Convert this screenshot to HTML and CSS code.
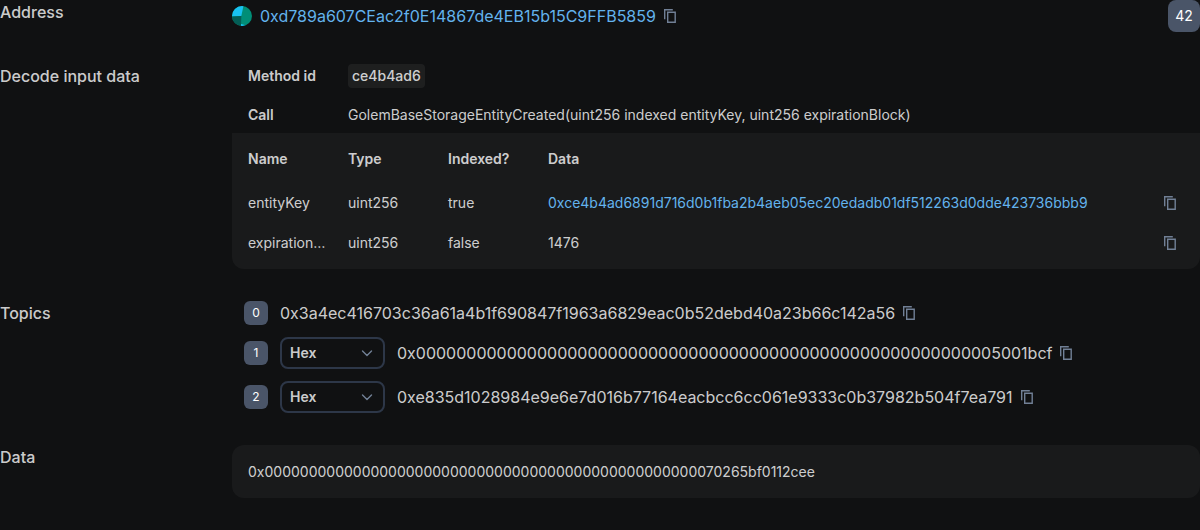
FILE: index.html
```html
<!DOCTYPE html>
<html lang="en">
<head>
<meta charset="utf-8">
<title>Transaction log</title>
<link rel="stylesheet" href="styles.css">
</head>
<body>
<svg class="defs" aria-hidden="true">
  <symbol id="copy" viewBox="0 0 20 20">
    <path d="M4.7 13.3V3.7H12.8M7.7 6.2H15.2V16.2H7.7Z" fill="none" stroke="currentColor" stroke-width="1.4"/>
  </symbol>
  <symbol id="chevron" viewBox="0 0 20 20">
    <path d="M5.5 8L10 12.5L14.5 8" fill="none" stroke="currentColor" stroke-width="1.4" stroke-linecap="round" stroke-linejoin="round"/>
  </symbol>
</svg>
<main class="log">
  <div class="label">Address</div>
  <div class="address">
    <svg class="avatar" viewBox="0 0 20 20">
      <clipPath id="round"><circle cx="10" cy="10" r="10"/></clipPath>
      <g clip-path="url(#round)">
        <rect width="20" height="20" fill="#018e77"/>
        <path d="M0 0H11.5L9.3 10L0 10.4Z" fill="#18c2f2"/>
        <path d="M0 10.4L9.3 10L9 20H0Z" fill="#035e56"/>
        <path d="M9 18L15 19.5V20H9Z" fill="#18c2f2"/>
      </g>
    </svg>
    <a class="link hash">0xd789a607CEac2f0E14867de4EB15b15C9FFB5859</a>
    <svg class="icon"><use href="#copy"/></svg>
    <span class="index">42</span>
  </div>

  <div class="label">Decode input data</div>
  <div class="decoded">
    <div class="summary">
      <b>Method id</b><div><span class="tag">ce4b4ad6</span></div>
      <b>Call</b><span>GolemBaseStorageEntityCreated(uint256 indexed entityKey, uint256 expirationBlock)</span>
    </div>
    <div class="params">
      <b>Name</b><b>Type</b><b>Indexed?</b><b>Data</b>
      <span class="cut">entityKey</span><span>uint256</span><span>true</span>
      <div class="value"><a class="link">0xce4b4ad6891d716d0b1fba2b4aeb05ec20edadb01df512263d0dde423736bbb9</a><svg class="icon"><use href="#copy"/></svg></div>
      <span class="cut">expirationBlock</span><span>uint256</span><span>false</span>
      <div class="value"><span>1476</span><svg class="icon"><use href="#copy"/></svg></div>
    </div>
  </div>

  <div class="label">Topics</div>
  <div class="topics">
    <div class="topic"><span class="num">0</span><span class="hash">0x3a4ec416703c36a61a4b1f690847f1963a6829eac0b52debd40a23b66c142a56</span><svg class="icon"><use href="#copy"/></svg></div>
    <div class="topic"><span class="num">1</span><button class="select">Hex<svg class="icon"><use href="#chevron"/></svg></button><span class="hash">0x0000000000000000000000000000000000000000000000000000000005001bcf</span><svg class="icon"><use href="#copy"/></svg></div>
    <div class="topic"><span class="num">2</span><button class="select">Hex<svg class="icon"><use href="#chevron"/></svg></button><span class="hash">0xe835d1028984e9e6e7d016b77164eacbcc6cc061e9333c0b37982b504f7ea791</span><svg class="icon"><use href="#copy"/></svg></div>
  </div>

  <div class="label">Data</div>
  <div class="data">0x0000000000000000000000000000000000000000000000000070265bf0112cee</div>
</main>
</body>
</html>
```
FILE: styles.css
```css
* { box-sizing: border-box; }
body {
  margin: 0;
  background: #101112;
  color: rgba(255, 255, 255, 0.8);
  font: 400 16px/24px Inter, sans-serif;
}
b { font-weight: 600; }
.defs { display: none; }
.log {
  display: grid;
  grid-template-columns: 200px minmax(0, 1fr);
  column-gap: 32px;
  row-gap: 32px;
}
.label { font-weight: 500; }
.address { display: flex; align-items: center; height: 32px; }
.avatar { width: 20px; height: 20px; margin-right: 8px; }
.link { color: #63b3ed; }
.icon { width: 20px; height: 20px; flex: none; color: #718096; }
.hash + .icon { margin-left: 4px; }
.index {
  margin-left: auto;
  width: 32px;
  height: 32px;
  border-radius: 8px;
  background: #4a5568;
  color: #fff;
  font-size: 14px;
  line-height: 32px;
  text-align: center;
}
.decoded { font-size: 14px; line-height: 20px; }
.summary {
  display: grid;
  grid-template-columns: 80px 1fr;
  column-gap: 20px;
  row-gap: 17px;
  align-items: center;
  padding: 0 16px 8px;
}
.tag {
  display: block;
  width: max-content;
  padding: 2px 4px;
  border-radius: 4px;
  background: rgba(255, 255, 255, 0.06);
  font-weight: 500;
}
.params {
  display: grid;
  grid-template-columns: 80px 80px 80px minmax(0, 1fr);
  gap: 20px;
  padding: 16px 20px 16px 16px;
  border-radius: 0 0 12px 12px;
  background: rgba(255, 255, 255, 0.04);
}
.params b { padding-bottom: 4px; }
.cut { overflow: hidden; text-overflow: ellipsis; white-space: nowrap; }
.value { display: flex; justify-content: space-between; }
.topics { display: flex; flex-direction: column; gap: 12px; padding-left: 12px; }
.topic { display: flex; align-items: center; }
.num {
  width: 24px;
  height: 24px;
  margin-right: 12px;
  border-radius: 6px;
  background: #4a5568;
  color: #fff;
  font-size: 12px;
  text-align: center;
}
.select {
  display: flex;
  align-items: center;
  justify-content: space-between;
  width: 105px;
  height: 32px;
  margin-right: 12px;
  padding: 0 6px 0 8px;
  border: 2px solid #2d3748;
  border-radius: 8px;
  background: none;
  color: inherit;
  font: 600 14px/20px Inter, sans-serif;
}
.data {
  padding: 16px;
  border-radius: 12px;
  background: rgba(255, 255, 255, 0.04);
  font-size: 14px;
  line-height: 21px;
}
```
